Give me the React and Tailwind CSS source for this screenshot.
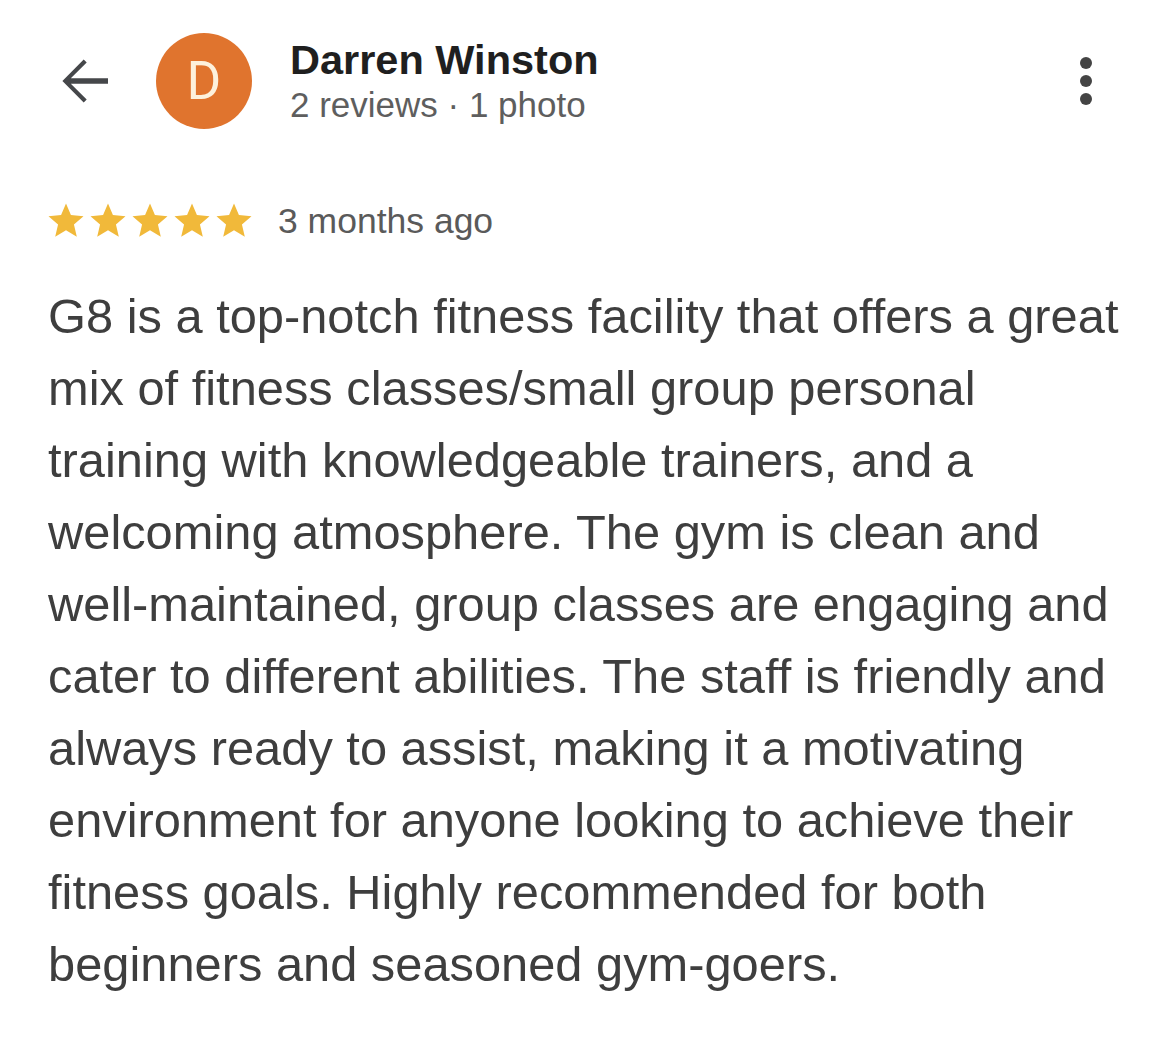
const reviewText =
  "G8 is a top-notch fitness facility that offers a great mix of fitness classes/small group personal training with knowledgeable trainers, and a welcoming atmosphere. The gym is clean and well-maintained, group classes are engaging and cater to different abilities. The staff is friendly and always ready to assist, making it a motivating environment for anyone looking to achieve their fitness goals. Highly recommended for both beginners and seasoned gym-goers.";

// material-style icons, drawn at 24 units
const BackArrow = () => (
  <svg viewBox="0 0 24 24" className="w-[72px] h-[72px] shrink-0" fill="#45474a">
    <path d="M20 11.1H7.6l5.3-5.3L11.9 4.8 4.8 12l7.1 7.2 1-1-5.3-5.3H20z" />
  </svg>
);

const MoreVert = () => (
  <svg viewBox="0 0 24 24" className="w-[72px] h-[72px] shrink-0" fill="#444">
    <circle cx="12" cy="6" r="2" />
    <circle cx="12" cy="12" r="2" />
    <circle cx="12" cy="18" r="2" />
  </svg>
);

const StarIcon = () => (
  <svg viewBox="0 0 24 24" className="w-[42px] h-[42px] shrink-0" fill="#f1b93a">
    <path d="M12 17.27L18.18 21l-1.64-7.03L22 9.24l-7.19-.61L12 2 9.19 8.63 2 9.24l5.46 4.73L5.82 21z" />
  </svg>
);

const App = () => {
  return (
    <div className="w-[1170px] min-h-[1046px] bg-white font-['Liberation_Sans',Arial,sans-serif]">
      {/* header */}
      <div className="flex items-center pl-12 pr-12 pt-[33px]">
        <BackArrow />
        <div className="ml-9 w-24 h-24 rounded-full bg-[#e0742e] flex items-center justify-center shrink-0">
          <span className="font-['Roboto',sans-serif] text-[53px] leading-none text-[#fdf1dc]">
            D
          </span>
        </div>
        <div className="ml-[38px] flex-1 flex flex-col">
          <span className="text-[41.5px] leading-[48px] font-bold text-[#1f1f1f]">
            Darren Winston
          </span>
          <span className="text-[35px] leading-[42px] text-[#5e5e5e]">
            2 reviews · 1 photo
          </span>
        </div>
        <MoreVert />
      </div>

      {/* rating */}
      <div className="flex items-center pl-[45px] mt-[71px]">
        {[0, 1, 2, 3, 4].map((i) => (
          <StarIcon key={i} />
        ))}
        <span className="ml-[23px] text-[35.5px] leading-[42px] text-[#5a5a5a]">
          3 months ago
        </span>
      </div>

      {/* body */}
      <p className="mt-[38px] pl-12 pr-10 text-[48.8px] leading-[72px] text-[#3e3e3e]">
        {reviewText}
      </p>
    </div>
  );
};

export default App;
